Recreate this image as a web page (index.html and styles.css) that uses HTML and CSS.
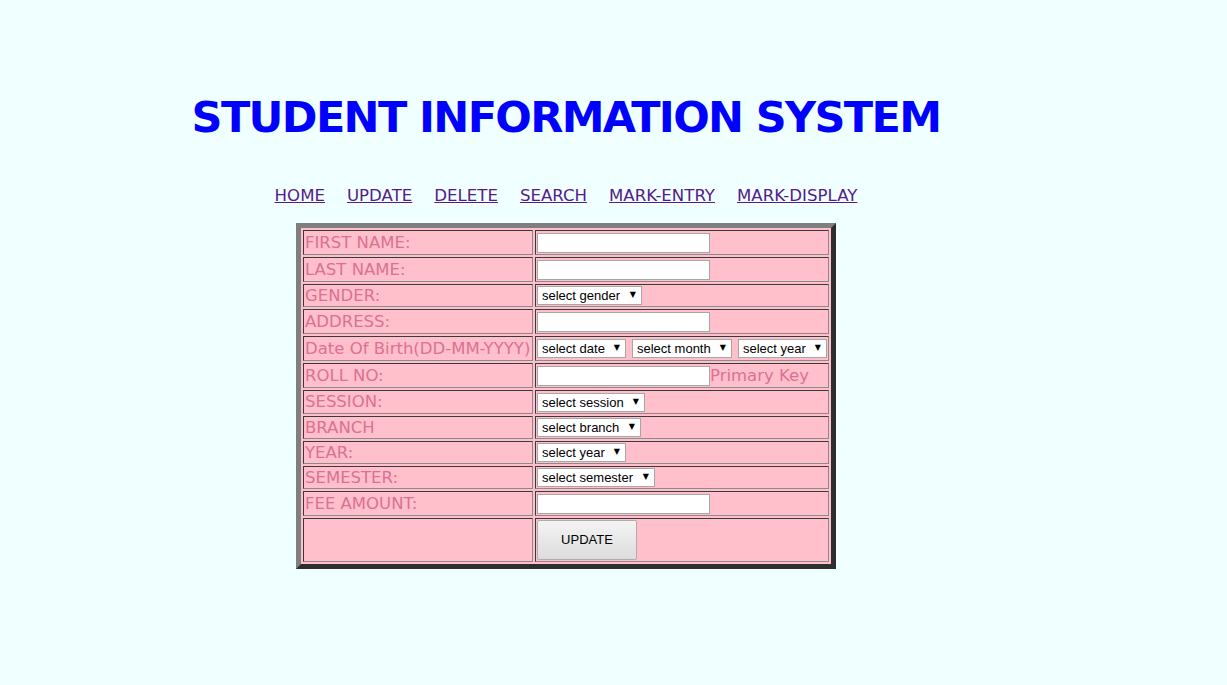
FILE: index.html
```html
<!DOCTYPE html>
<html>
<head>
<meta charset="utf-8">
<title>Student Information System</title>
<link rel="stylesheet" href="styles.css">
</head>
<body>
<div class="wrap">
  <h1 class="title">STUDENT INFORMATION SYSTEM</h1>
  <nav class="nav">
    <a href="#">HOME</a>
    <a href="#">UPDATE</a>
    <a href="#">DELETE</a>
    <a href="#">SEARCH</a>
    <a href="#">MARK-ENTRY</a>
    <a href="#">MARK-DISPLAY</a>
  </nav>
  <table class="form">
    <tr class="row-text">
      <td class="label">FIRST NAME:</td>
      <td class="field"><div class="ctrl"><input class="text" type="text"></div></td>
    </tr>
    <tr class="row-text">
      <td class="label">LAST NAME:</td>
      <td class="field"><div class="ctrl"><input class="text" type="text"></div></td>
    </tr>
    <tr class="row-sel">
      <td class="label">GENDER:</td>
      <td class="field"><div class="ctrl"><span class="select"><select class="sel w-gender"><option>select gender</option></select></span></div></td>
    </tr>
    <tr class="row-text">
      <td class="label">ADDRESS:</td>
      <td class="field"><div class="ctrl"><input class="text" type="text"></div></td>
    </tr>
    <tr class="row-text">
      <td class="label">Date Of Birth(DD-MM-YYYY)</td>
      <td class="field"><div class="ctrl dob">
        <span class="select"><select class="sel w-date"><option>select date</option></select></span>
        <span class="select"><select class="sel w-month"><option>select month</option></select></span>
        <span class="select"><select class="sel w-year"><option>select year</option></select></span>
      </div></td>
    </tr>
    <tr class="row-text">
      <td class="label">ROLL NO:</td>
      <td class="field"><div class="ctrl"><input class="text" type="text"><span class="hint">Primary Key</span></div></td>
    </tr>
    <tr class="row-sess">
      <td class="label">SESSION:</td>
      <td class="field"><div class="ctrl"><span class="select"><select class="sel w-session"><option>select session</option></select></span></div></td>
    </tr>
    <tr class="row-sel">
      <td class="label">BRANCH</td>
      <td class="field"><div class="ctrl"><span class="select"><select class="sel w-branch"><option>select branch</option></select></span></div></td>
    </tr>
    <tr class="row-sel">
      <td class="label">YEAR:</td>
      <td class="field"><div class="ctrl"><span class="select"><select class="sel w-year"><option>select year</option></select></span></div></td>
    </tr>
    <tr class="row-sel">
      <td class="label">SEMESTER:</td>
      <td class="field"><div class="ctrl"><span class="select"><select class="sel w-semester"><option>select semester</option></select></span></div></td>
    </tr>
    <tr class="row-text">
      <td class="label">FEE AMOUNT:</td>
      <td class="field"><div class="ctrl"><input class="text" type="text"></div></td>
    </tr>
    <tr class="row-btn">
      <td class="label"></td>
      <td class="field"><div class="ctrl"><button class="btn" type="button">UPDATE</button></div></td>
    </tr>
  </table>
</div>
</body>
</html>
```
FILE: styles.css
```css
html, body {
  background: #F0FFFF;
}
body {
  margin: 8px;
  font-family: "DejaVu Sans", Verdana, sans-serif;
}
.wrap {
  width: 1116px;
  display: flex;
  flex-direction: column;
  align-items: center;
}
.title {
  margin: 85px 0 0 0;
  font-size: 43px;
  line-height: 48px;
  font-weight: bold;
  color: #0000FF;
  letter-spacing: -1.65px;
  white-space: nowrap;
}
.nav {
  margin-top: 45px;
  display: flex;
  gap: 22px;
  font-size: 16.6px;
  line-height: 19px;
}
.nav a {
  color: #551A8B;
  text-decoration: underline;
}
.form {
  margin-top: 18px;
  width: 540px;
  table-layout: fixed;
  background: #FFC0CB;
  border-style: solid;
  border-width: 5px;
  border-color: #7f7f7f #2e2e2e #2e2e2e #7f7f7f;
  border-spacing: 2px;
  border-collapse: separate;
}
.form td {
  padding: 1px;
  border: 1px solid;
  border-color: #3a3a3a #8a8a8a #8a8a8a #3a3a3a;
  vertical-align: middle;
}
.label {
  width: 226px;
  color: #DB7093;
  font-size: 16.5px;
  white-space: nowrap;
  overflow: hidden;
}
.field {
  width: 290px;
}
.row-text td { line-height: 21px; }
.row-sel td { line-height: 19px; }
.row-sess td { line-height: 20px; }
.row-btn td { line-height: 40px; }
.ctrl {
  display: flex;
  align-items: center;
}
.row-text .ctrl { height: 21px; }
.row-sel .ctrl { height: 19px; }
.row-sess .ctrl { height: 20px; }
.row-btn .ctrl { height: 40px; }
.dob { gap: 6px; }
.text {
  box-sizing: border-box;
  width: 173px;
  height: 20px;
  margin: 0;
  padding: 1px 2px;
  border: 1px solid #a6a6a6;
  background: #fff;
  font-family: "Liberation Sans", Arial, sans-serif;
  font-size: 13px;
}
.hint {
  color: #DB7093;
  font-size: 16.5px;
  line-height: 21px;
}
.select {
  position: relative;
  display: block;
  height: 19px;
}
.select::after {
  content: "▼";
  position: absolute;
  right: 6px;
  top: 4px;
  font-size: 8px;
  line-height: 10px;
  color: #000;
  pointer-events: none;
}
.sel {
  -webkit-appearance: none;
  appearance: none;
  box-sizing: border-box;
  display: block;
  height: 19px;
  margin: 0;
  padding: 0 16px 0 4px;
  border: 1px solid #a6a6a6;
  border-radius: 0;
  background: #fff;
  color: #000;
  font-family: "Liberation Sans", Arial, sans-serif;
  font-size: 13px;
  line-height: 17px;
}
.w-gender { width: 105px; }
.w-date { width: 89px; }
.w-month { width: 100px; }
.w-year { width: 89px; }
.w-session { width: 108px; }
.w-branch { width: 104px; }
.w-semester { width: 118px; }
.btn {
  box-sizing: border-box;
  width: 100px;
  height: 40px;
  margin: 0;
  border: 1px solid #adadad;
  border-radius: 2px;
  background: linear-gradient(#f4f4f4, #dcdcdc);
  color: #000;
  font-family: "Liberation Sans", Arial, sans-serif;
  font-size: 13px;
  line-height: 16px;
}
```
